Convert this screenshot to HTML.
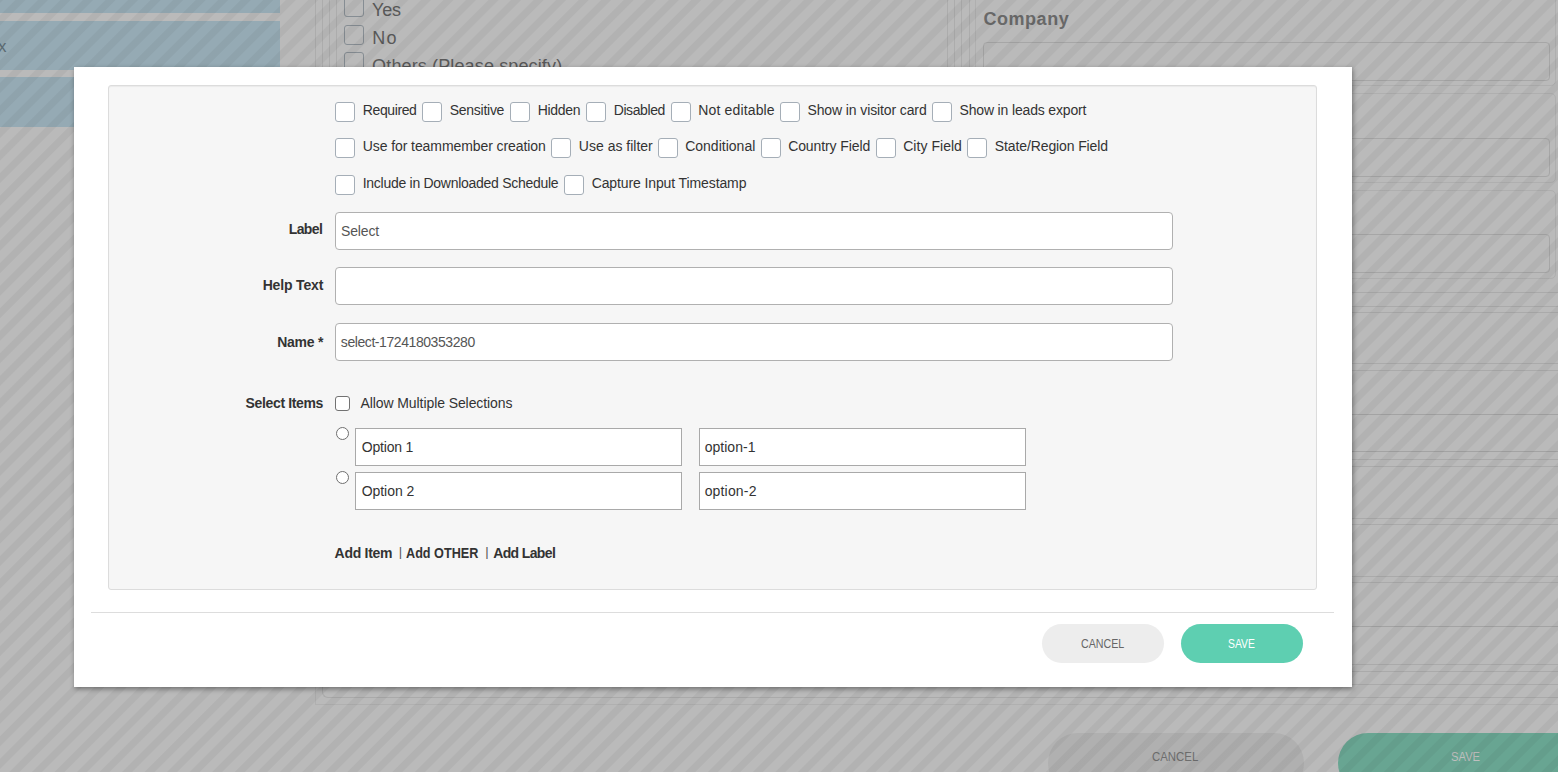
<!DOCTYPE html>
<html><head><meta charset="utf-8"><style>
html,body{margin:0;padding:0;}
body{width:1558px;height:772px;overflow:hidden;position:relative;background:#bababa;font-family:'Liberation Sans', sans-serif;}
.t{position:absolute;white-space:pre;}
.bg{position:absolute;left:0;top:0;width:1558px;height:772px;overflow:hidden;}
.blue{position:absolute;left:0;width:280px;background:#95aab4;}
.hl{position:absolute;left:975px;width:583px;height:1px;background:#aaaaaa;}
.card{position:absolute;left:975px;width:579px;border:1px solid #afafaf;border-radius:5px;}
.vl{position:absolute;top:0;width:1px;height:80px;background:#acacac;}
.bcb{position:absolute;left:344px;width:18px;height:18px;border:1px solid #868d93;border-radius:3px;}
.stripes{position:absolute;left:0;top:0;width:1558px;height:772px;
 background:repeating-linear-gradient(135deg, rgba(0,0,0,.045) 0px, rgba(0,0,0,.045) 1.6px, rgba(0,0,0,0) 2.6px, rgba(0,0,0,0) 10.4px, rgba(0,0,0,.045) 11.4px, rgba(0,0,0,.045) 15.93px);}
.modal{position:absolute;left:74px;top:67px;width:1278px;height:620px;background:#fff;box-shadow:1px 2px 5px rgba(0,0,0,.4);}
.abs{position:absolute;}
.panel{position:absolute;left:108px;top:85px;width:1207px;height:503px;background:#f6f6f6;border:1px solid #dcdcdc;border-radius:3px;box-shadow:inset 0 1px 1px rgba(0,0,0,.05);}
.cb{position:absolute;width:18px;height:18px;background:#fff;border:1px solid #a5aeb7;border-radius:3px;}
.inp{position:absolute;left:335px;width:836px;height:36px;background:#fff;border:1px solid #b0b0b0;border-radius:4px;}
.oinp{position:absolute;width:325px;height:36px;background:#fff;border:1px solid #a9a9a9;}
.radio{position:absolute;left:335.5px;width:11.4px;height:11.4px;border:1.1px solid #6f6f6f;border-radius:50%;background:#fff;}
.scb{position:absolute;left:335px;top:396px;width:13px;height:13px;border:1px solid #727272;border-radius:3px;background:#fff;}
.btn{position:absolute;top:624px;height:39px;border-radius:20px;}
</style></head><body>
<div class="bg">
<div class="blue" style="top:0;height:13px"></div>
<div class="blue" style="top:21px;height:49px"></div>
<div class="blue" style="top:77px;height:50px"></div>
<span class="t" style="left:-2px;top:38px;font-size:17px;line-height:17px;color:#5b6a72">x</span>
<div class="vl" style="left:315px"></div>
<div class="vl" style="left:322px"></div>
<div class="vl" style="left:329px"></div>
<div class="vl" style="left:336px"></div>
<div class="vl" style="left:947px"></div>
<div class="vl" style="left:954px"></div>
<div class="vl" style="left:961px"></div>
<div class="vl" style="left:969px"></div>
<div class="vl" style="left:975px"></div>
<div class="hl" style="top:292px"></div>
<div class="hl" style="top:306px"></div>
<div class="hl" style="top:312px"></div>
<div class="hl" style="top:363px"></div>
<div class="hl" style="top:370px"></div>
<div class="hl" style="top:414px;background:#a3a3a3"></div>
<div class="hl" style="top:451px;background:#a3a3a3"></div>
<div class="hl" style="top:459px"></div>
<div class="hl" style="top:466px"></div>
<div class="hl" style="top:518px"></div>
<div class="hl" style="top:524px"></div>
<div class="hl" style="top:576px"></div>
<div class="hl" style="top:582px"></div>
<div class="hl" style="top:626px;background:#a3a3a3"></div>
<div class="hl" style="top:664px"></div>
<div class="hl" style="top:671px"></div>
<div class="hl" style="top:684px"></div>
<div class="card" style="top:-20px;height:104px"></div>
<div class="card" style="top:93px;height:88px"></div>
<div class="card" style="top:190px;height:87px"></div>
<div class="abs" style="left:983px;top:42px;width:565px;height:37px;border:1px solid #a6a6a6;border-radius:4px"></div>
<div class="abs" style="left:983px;top:138px;width:565px;height:37px;border:1px solid #a6a6a6;border-radius:4px"></div>
<div class="abs" style="left:983px;top:234px;width:565px;height:37px;border:1px solid #a6a6a6;border-radius:4px"></div>
<div class="bcb" style="top:-3px"></div>
<div class="bcb" style="top:25px"></div>
<div class="bcb" style="top:52px"></div>
<div class="abs" style="left:322px;top:600px;width:1300px;height:97px;border-left:1px solid #aaa;border-bottom:1px solid #aaa;border-radius:0 0 0 6px"></div>
<div class="abs" style="left:315px;top:600px;width:1300px;height:104px;border-left:1px solid #b0b0b0;border-bottom:1px solid #b0b0b0"></div>
<div class="abs" style="left:1048px;top:733px;width:256px;height:60px;border-radius:30px;background:#b0b0b0"></div>
<div class="abs" style="left:1338px;top:733px;width:300px;height:60px;border-radius:30px;background:#68a592"></div>
<span class="t" style="left:372.12px;top:1.00px;font-size:18px;line-height:18px;font-weight:400;color:#595959;letter-spacing:-0.277px;">Yes</span>
<span class="t" style="left:372.32px;top:28.80px;font-size:18px;line-height:18px;font-weight:400;color:#595959;letter-spacing:1.204px;">No</span>
<span class="t" style="left:372.12px;top:56.50px;font-size:18px;line-height:18px;font-weight:400;color:#595959;letter-spacing:0.134px;">Others (Please specify)</span>
<span class="t" style="left:983.42px;top:9.60px;font-size:18px;line-height:18px;font-weight:700;color:#696969;letter-spacing:0.551px;">Company</span>
<span class="t" style="left:1152.42px;top:750.20px;font-size:13px;line-height:13px;font-weight:400;color:#6e6e6e;letter-spacing:0.000px;transform:scaleX(0.8782);transform-origin:0 0;">CANCEL</span>
<span class="t" style="left:1450.72px;top:750.00px;font-size:13px;line-height:13px;font-weight:400;color:#bfbfbf;letter-spacing:0.000px;transform:scaleX(0.8633);transform-origin:0 0;">SAVE</span>
</div>
<div class="stripes"></div>
<div class="modal"></div>
<div class="panel"></div>
<div class="cb" style="left:335px;top:102px"></div>
<div class="cb" style="left:422px;top:102px"></div>
<div class="cb" style="left:510px;top:102px"></div>
<div class="cb" style="left:586px;top:102px"></div>
<div class="cb" style="left:671px;top:102px"></div>
<div class="cb" style="left:780px;top:102px"></div>
<div class="cb" style="left:932px;top:102px"></div>
<div class="cb" style="left:335px;top:138px"></div>
<div class="cb" style="left:551px;top:138px"></div>
<div class="cb" style="left:658px;top:138px"></div>
<div class="cb" style="left:761px;top:138px"></div>
<div class="cb" style="left:876px;top:138px"></div>
<div class="cb" style="left:967px;top:138px"></div>
<div class="cb" style="left:335px;top:175px"></div>
<div class="cb" style="left:564px;top:175px"></div>
<div class="inp" style="top:212px"></div>
<div class="inp" style="top:267px"></div>
<div class="inp" style="top:323px"></div>
<div class="scb"></div>
<div class="radio" style="top:427px"></div>
<div class="radio" style="top:471px"></div>
<div class="oinp" style="left:355px;top:428px"></div>
<div class="oinp" style="left:699px;top:428px"></div>
<div class="oinp" style="left:355px;top:472px"></div>
<div class="oinp" style="left:699px;top:472px"></div>
<div class="abs" style="left:91px;top:612px;width:1243px;height:1px;background:#dddddd"></div>
<div class="btn" style="left:1042px;width:122px;background:#ededed"></div>
<div class="btn" style="left:1181px;width:122px;background:#5ecfb1"></div>
<span class="t" style="left:362.76px;top:103.00px;font-size:14px;line-height:14px;font-weight:400;color:#333;letter-spacing:-0.381px;">Required</span>
<span class="t" style="left:449.76px;top:103.00px;font-size:14px;line-height:14px;font-weight:400;color:#333;letter-spacing:-0.269px;">Sensitive</span>
<span class="t" style="left:537.76px;top:103.00px;font-size:14px;line-height:14px;font-weight:400;color:#333;letter-spacing:-0.303px;">Hidden</span>
<span class="t" style="left:613.66px;top:103.00px;font-size:14px;line-height:14px;font-weight:400;color:#333;letter-spacing:-0.389px;">Disabled</span>
<span class="t" style="left:698.36px;top:103.00px;font-size:14px;line-height:14px;font-weight:400;color:#333;letter-spacing:0.140px;">Not editable</span>
<span class="t" style="left:807.46px;top:103.00px;font-size:14px;line-height:14px;font-weight:400;color:#333;letter-spacing:-0.112px;">Show in visitor card</span>
<span class="t" style="left:959.46px;top:103.00px;font-size:14px;line-height:14px;font-weight:400;color:#333;letter-spacing:-0.153px;">Show in leads export</span>
<span class="t" style="left:362.76px;top:139.00px;font-size:14px;line-height:14px;font-weight:400;color:#333;letter-spacing:-0.082px;">Use for teammember creation</span>
<span class="t" style="left:578.86px;top:139.00px;font-size:14px;line-height:14px;font-weight:400;color:#333;letter-spacing:-0.005px;">Use as filter</span>
<span class="t" style="left:685.16px;top:139.00px;font-size:14px;line-height:14px;font-weight:400;color:#333;letter-spacing:0.010px;">Conditional</span>
<span class="t" style="left:788.16px;top:139.00px;font-size:14px;line-height:14px;font-weight:400;color:#333;letter-spacing:-0.092px;">Country Field</span>
<span class="t" style="left:903.16px;top:139.00px;font-size:14px;line-height:14px;font-weight:400;color:#333;letter-spacing:0.045px;">City Field</span>
<span class="t" style="left:994.86px;top:139.00px;font-size:14px;line-height:14px;font-weight:400;color:#333;letter-spacing:-0.119px;">State/Region Field</span>
<span class="t" style="left:362.76px;top:176.00px;font-size:14px;line-height:14px;font-weight:400;color:#333;letter-spacing:-0.279px;">Include in Downloaded Schedule</span>
<span class="t" style="left:591.66px;top:176.00px;font-size:14px;line-height:14px;font-weight:400;color:#333;letter-spacing:-0.110px;">Capture Input Timestamp</span>
<span class="t" style="left:288.66px;top:222.10px;font-size:14px;line-height:14px;font-weight:700;color:#333;letter-spacing:-0.580px;">Label</span>
<span class="t" style="left:262.66px;top:278.30px;font-size:14px;line-height:14px;font-weight:700;color:#333;letter-spacing:-0.153px;">Help Text</span>
<span class="t" style="left:277.16px;top:334.50px;font-size:14px;line-height:14px;font-weight:700;color:#333;letter-spacing:-0.242px;">Name *</span>
<span class="t" style="left:245.56px;top:396.30px;font-size:14px;line-height:14px;font-weight:700;color:#333;letter-spacing:-0.351px;">Select Items</span>
<span class="t" style="left:341.06px;top:223.90px;font-size:14px;line-height:14px;font-weight:400;color:#555;letter-spacing:-0.172px;">Select</span>
<span class="t" style="left:340.86px;top:334.90px;font-size:14px;line-height:14px;font-weight:400;color:#555;letter-spacing:-0.427px;">select-1724180353280</span>
<span class="t" style="left:360.46px;top:396.30px;font-size:14px;line-height:14px;font-weight:400;color:#333;letter-spacing:-0.084px;">Allow Multiple Selections</span>
<span class="t" style="left:361.66px;top:440.20px;font-size:14px;line-height:14px;font-weight:400;color:#333;letter-spacing:-0.168px;">Option 1</span>
<span class="t" style="left:361.66px;top:484.20px;font-size:14px;line-height:14px;font-weight:400;color:#333;letter-spacing:-0.040px;">Option 2</span>
<span class="t" style="left:704.66px;top:440.20px;font-size:14px;line-height:14px;font-weight:400;color:#333;letter-spacing:0.024px;">option-1</span>
<span class="t" style="left:704.66px;top:484.20px;font-size:14px;line-height:14px;font-weight:400;color:#333;letter-spacing:0.167px;">option-2</span>
<span class="t" style="left:334.56px;top:546.00px;font-size:14px;line-height:14px;font-weight:700;color:#333;letter-spacing:-0.276px;">Add Item</span>
<span class="t" style="left:398.82px;top:545.00px;font-size:13px;line-height:13px;font-weight:400;color:#555;letter-spacing:0.000px;">|</span>
<span class="t" style="left:406.26px;top:546.00px;font-size:14px;line-height:14px;font-weight:700;color:#333;letter-spacing:0.000px;transform:scaleX(0.9030);transform-origin:0 0;">Add OTHER</span>
<span class="t" style="left:485.32px;top:545.00px;font-size:13px;line-height:13px;font-weight:400;color:#555;letter-spacing:0.000px;">|</span>
<span class="t" style="left:493.16px;top:546.00px;font-size:14px;line-height:14px;font-weight:700;color:#333;letter-spacing:-0.626px;">Add Label</span>
<span class="t" style="left:1081.02px;top:637.30px;font-size:13px;line-height:13px;font-weight:400;color:#666;letter-spacing:0.000px;transform:scaleX(0.8201);transform-origin:0 0;">CANCEL</span>
<span class="t" style="left:1228.22px;top:637.30px;font-size:13px;line-height:13px;font-weight:400;color:#fff;letter-spacing:0.000px;transform:scaleX(0.7988);transform-origin:0 0;">SAVE</span>
</body></html>
